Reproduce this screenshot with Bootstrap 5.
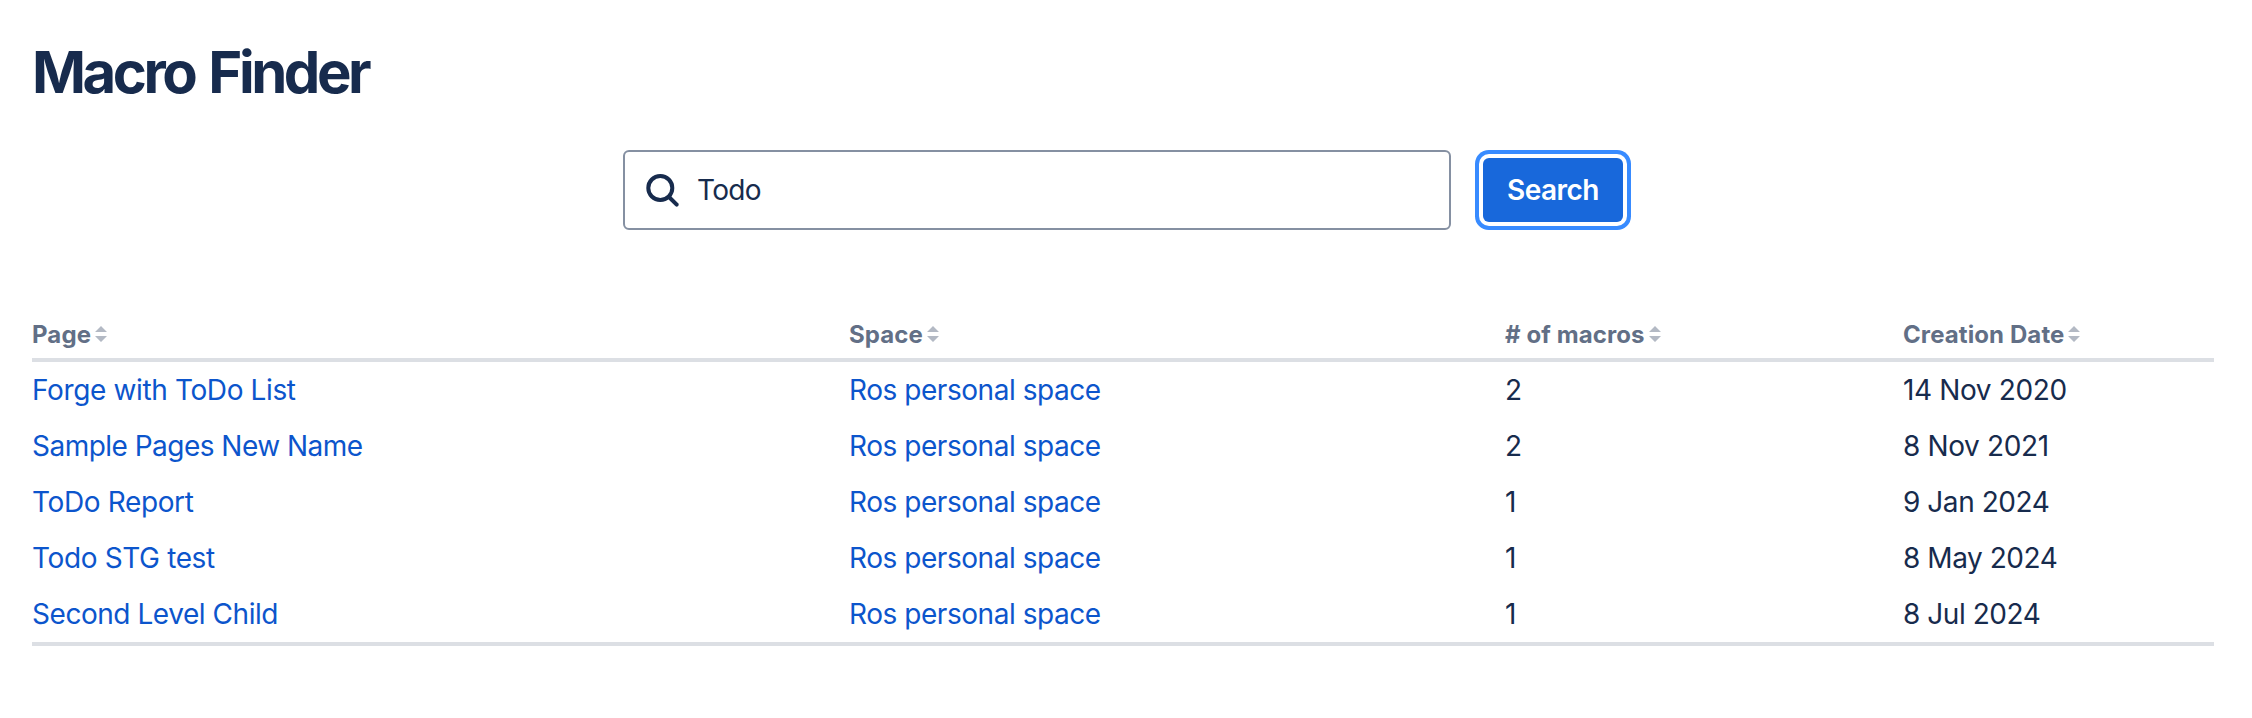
<!DOCTYPE html>
<html lang="en">
<head>
<meta charset="utf-8">
<meta name="viewport" content="width=device-width, initial-scale=1">
<title>Macro Finder</title>
<link href="https://cdn.jsdelivr.net/npm/bootstrap@5.3.0/dist/css/bootstrap.min.css" rel="stylesheet">
<style>
  body { font-family: Inter, "Liberation Sans", sans-serif; font-size: 28px; line-height: 40px; color: #172b4d; background: #fff; }
  .finder { padding: 40px 38px 0 32px; }
  .finder-title { font-size: 58px; line-height: 64px; font-weight: 650; letter-spacing: -3.45px; word-spacing: 3.7px; }
  .finder-search { margin: 46px 0 84px; gap: 32px; }
  .query { width: 828px; height: 80px; padding: 0 20px; border: 2px solid #8590a2; border-radius: 6px; gap: 16px; }
  .query svg { flex: none; }
  .query .form-control { font-size: 28px; line-height: 40px; color: #172b4d; letter-spacing: -.7px; }
  .btn-search { --bs-btn-color: #fff; --bs-btn-bg: #1868db; --bs-btn-border-width: 0; width: 140px; height: 64px; padding: 0; border-radius: 6px; font-size: 28px; line-height: 40px; font-weight: 600; letter-spacing: -.55px; box-shadow: 0 0 0 4px #fff, 0 0 0 8px #388bff; }
  .results { table-layout: fixed; --bs-table-color: #172b4d; border-color: #dcdfe4; letter-spacing: -.45px; }
  .results > :not(caption) > * > * { padding: 8px 0; border: 0; }
  .results > thead > tr > th { padding: 0 0 7px; height: 46px; font-size: 24px; line-height: 32px; font-weight: 700; letter-spacing: .1px; color: #626f86; }
  .results > thead { border-bottom: 4px solid #dcdfe4; }
  .results > tbody { border-bottom: 4px solid #dcdfe4; }
  .results a { color: #0c55cc; }
  .results .tight { letter-spacing: -.52px; }
  .results .loose { letter-spacing: -.37px; }
  .sorter { display: inline-block; margin-left: 4px; vertical-align: 1px; }
</style>
</head>
<body>
<main class="finder">
  <h1 class="finder-title m-0">Macro Finder</h1>
  <form class="finder-search d-flex justify-content-center align-items-center">
    <div class="query d-flex align-items-center">
      <svg width="36" height="36" viewBox="0 0 36 36" fill="none" stroke="#172b4d" stroke-width="4" stroke-linecap="round" aria-hidden="true"><circle cx="15.3" cy="16" r="12"/><path d="M24 25l7.7 7.7"/></svg>
      <input class="form-control border-0 p-0 shadow-none bg-transparent" type="text" value="Todo" aria-label="Macro name">
    </div>
    <button class="btn btn-search" type="button">Search</button>
  </form>
  <table class="results table mb-0">
    <colgroup><col style="width:817px"><col style="width:656px"><col style="width:398px"><col></colgroup>
    <thead>
      <tr>
        <th><span>Page</span><svg class="sorter" width="12" height="16" viewBox="0 0 12 16" fill="#b3b9c4"><path d="M0 6L6 0l6 6zM0 10h12l-6 6z"/></svg></th>
        <th><span>Space</span><svg class="sorter" width="12" height="16" viewBox="0 0 12 16" fill="#b3b9c4"><path d="M0 6L6 0l6 6zM0 10h12l-6 6z"/></svg></th>
        <th><span># of macros</span><svg class="sorter" width="12" height="16" viewBox="0 0 12 16" fill="#b3b9c4"><path d="M0 6L6 0l6 6zM0 10h12l-6 6z"/></svg></th>
        <th><span>Creation Date</span><svg class="sorter" width="12" height="16" viewBox="0 0 12 16" fill="#b3b9c4"><path d="M0 6L6 0l6 6zM0 10h12l-6 6z"/></svg></th>
      </tr>
    </thead>
    <tbody>
      <tr><td><a class="text-decoration-none loose" href="#">Forge with ToDo List</a></td><td><a class="text-decoration-none" href="#">Ros personal space</a></td><td>2</td><td class="loose">14 Nov 2020</td></tr>
      <tr><td><a class="text-decoration-none tight" href="#">Sample Pages New Name</a></td><td><a class="text-decoration-none" href="#">Ros personal space</a></td><td>2</td><td class="loose">8 Nov 2021</td></tr>
      <tr><td><a class="text-decoration-none loose" href="#">ToDo Report</a></td><td><a class="text-decoration-none" href="#">Ros personal space</a></td><td>1</td><td>9 Jan 2024</td></tr>
      <tr><td><a class="text-decoration-none loose" href="#">Todo STG test</a></td><td><a class="text-decoration-none" href="#">Ros personal space</a></td><td>1</td><td>8 May 2024</td></tr>
      <tr><td><a class="text-decoration-none" href="#">Second Level Child</a></td><td><a class="text-decoration-none" href="#">Ros personal space</a></td><td>1</td><td>8 Jul 2024</td></tr>
    </tbody>
  </table>
</main>
<script src="https://cdn.jsdelivr.net/npm/bootstrap@5.3.0/dist/js/bootstrap.bundle.min.js"></script>
</body>
</html>
